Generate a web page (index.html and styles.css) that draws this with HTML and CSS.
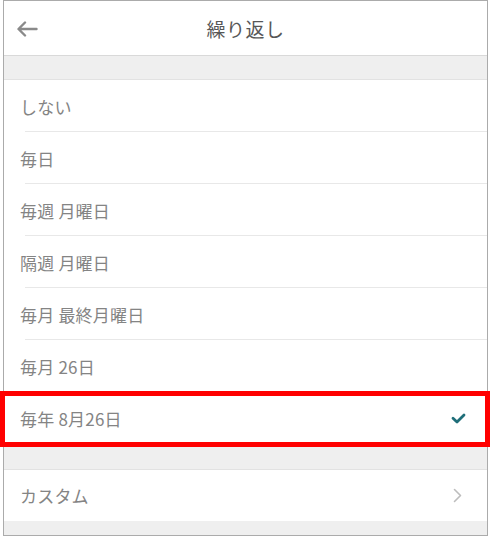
FILE: index.html
```html
<!DOCTYPE html>
<html lang="ja">
<head>
<meta charset="utf-8">
<title>繰り返し</title>
<link rel="stylesheet" href="styles.css">
</head>
<body>
<div class="frame">
  <div class="screen">
    <header class="topbar">
      <button class="back" aria-label="戻る">
        <svg width="22" height="16" viewBox="0 0 22 16"><path d="M20.5 8H3M9 1.5L2.5 8L9 14.5" fill="none" stroke="#8a8a8a" stroke-width="2.4" stroke-linecap="round" stroke-linejoin="round"/></svg>
      </button>
      <h1 class="title">繰り返し</h1>
    </header>
    <div class="spacer"></div>
    <ul class="list">
      <li class="row">しない</li>
      <li class="row">毎日</li>
      <li class="row">毎週 月曜日</li>
      <li class="row">隔週 月曜日</li>
      <li class="row">毎月 最終月曜日</li>
      <li class="row">毎月 26日</li>
      <li class="row selected">
        <span>毎年 8月26日</span>
        <svg class="check" width="15" height="11" viewBox="0 0 15 11"><path d="M2 5.2L6 9L13 2" fill="none" stroke="#1f6e79" stroke-width="2.8" stroke-linecap="round" stroke-linejoin="round"/></svg>
        <span class="highlight"></span>
      </li>
    </ul>
    <div class="spacer gap"></div>
    <ul class="list">
      <li class="row nav">
        <span>カスタム</span>
        <svg class="chevron" width="9" height="15" viewBox="0 0 9 15"><path d="M1.5 1.5L7.5 7.5L1.5 13.5" fill="none" stroke="#bdbdbd" stroke-width="1.6" stroke-linecap="round" stroke-linejoin="round"/></svg>
      </li>
    </ul>
    <div class="spacer bottom"></div>
  </div>
</div>
</body>
</html>
```

FILE: styles.css
```css
* {
  box-sizing: border-box;
}

html, body {
  margin: 0;
  padding: 0;
  background: #ffffff;
}

body {
  font-family: "Noto Sans CJK JP", "Noto Sans", sans-serif;
  color: #7a7a7a;
}

.frame {
  width: 490px;
  height: 537px;
  padding: 0 2px 1px 3px;
}

.screen {
  height: 100%;
  border: 1px solid #ababab;
  display: flex;
  flex-direction: column;
  background: #efefef;
}

.topbar {
  height: 55px;
  flex: none;
  background: #ffffff;
  border-bottom: 1px solid #d9d9d9;
  display: flex;
  align-items: center;
  justify-content: center;
  position: relative;
}

.back {
  position: absolute;
  left: 12px;
  top: 20px;
  padding: 0;
  border: 0;
  background: none;
  display: flex;
}

.title {
  margin: 0;
  font-size: 19px;
  font-weight: 400;
  color: #575757;
  letter-spacing: 0.5px;
}

.spacer {
  height: 24px;
  flex: none;
  border-bottom: 1px solid #e2e2e2;
}

.spacer.gap {
  height: 26px;
}

.spacer.bottom {
  flex: 1;
  border-bottom: 0;
}

.list {
  list-style: none;
  margin: 0;
  padding: 0;
  background: #ffffff;
}

.row {
  height: 52px;
  padding: 0 22px 0 16px;
  display: flex;
  align-items: center;
  justify-content: space-between;
  font-size: 17px;
  letter-spacing: 0.2px;
  color: #848484;
  position: relative;
}

/* hairline divider, inset from the left edge */
.row::after {
  content: "";
  position: absolute;
  left: 21px;
  right: 0;
  bottom: 0;
  height: 1px;
  background: #e8e8e8;
}

.row:last-child::after {
  display: none;
}

.row.selected {
  padding-right: 21px;
}

.row.nav {
  height: 51px;
  padding-right: 25px;
}

.highlight {
  position: absolute;
  left: -4px;
  right: -3px;
  top: -1px;
  bottom: -3px;
  border: 5px solid #ff0000;
  pointer-events: none;
}
```
